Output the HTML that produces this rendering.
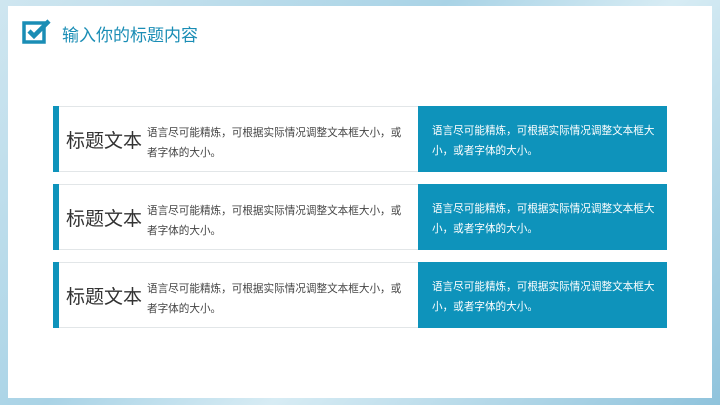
<!DOCTYPE html><html><head><meta charset="utf-8"><style>
body{margin:0;width:720px;height:405px;overflow:hidden;background:linear-gradient(135deg,#cfe6f0,#a9d3e6 40%,#d7ecf4 60%,#8fc3dc);font-family:"Liberation Sans","Noto Sans CJK SC",sans-serif;position:relative}
.panel{position:absolute;left:8px;top:6px;width:704px;height:392px;background:#fff}
.title{position:absolute;left:62px;top:21px;font-size:17px;color:#1a8db5}
.row{position:absolute;left:53px;width:614px;height:66px}
.bar{position:absolute;left:0;top:0;width:6px;height:66px;background:#0e93bb}
.wb{position:absolute;left:6px;top:0;width:359px;height:64px;border:1px solid #e2e6e8;border-left:none;background:#fff}
.h{position:absolute;left:7px;top:19px;font-size:19px;color:#333}
.t{position:absolute;left:88px;top:16px;width:264px;font-size:10.6px;line-height:20px;color:#444}
.bb{position:absolute;left:365px;top:0;width:249px;height:66px;background:#0e93bb}
.bt{position:absolute;left:14px;top:15px;width:226px;font-size:10.6px;line-height:20px;color:#fff}
</style></head><body>
<div class="panel"></div>
<svg style="position:absolute;left:22px;top:19px" width="30" height="26" viewBox="0 0 30 26"><rect x="2" y="4" width="20" height="19" fill="none" stroke="#1a8db5" stroke-width="3.5"/><path d="M7 12 L12 17 L27 2" fill="none" stroke="#1a8db5" stroke-width="4.5"/></svg>
<div class="title">输入你的标题内容</div>
<div class="row" style="top:106px"><div class="bar"></div><div class="wb"><div class="h">标题文本</div><div class="t">语言尽可能精炼，可根据实际情况调整文本框大小，或者字体的大小。</div></div><div class="bb"><div class="bt">语言尽可能精炼，可根据实际情况调整文本框大小，或者字体的大小。</div></div></div>
<div class="row" style="top:184px"><div class="bar"></div><div class="wb"><div class="h">标题文本</div><div class="t">语言尽可能精炼，可根据实际情况调整文本框大小，或者字体的大小。</div></div><div class="bb"><div class="bt">语言尽可能精炼，可根据实际情况调整文本框大小，或者字体的大小。</div></div></div>
<div class="row" style="top:262px"><div class="bar"></div><div class="wb"><div class="h">标题文本</div><div class="t">语言尽可能精炼，可根据实际情况调整文本框大小，或者字体的大小。</div></div><div class="bb"><div class="bt">语言尽可能精炼，可根据实际情况调整文本框大小，或者字体的大小。</div></div></div>
</body></html>
